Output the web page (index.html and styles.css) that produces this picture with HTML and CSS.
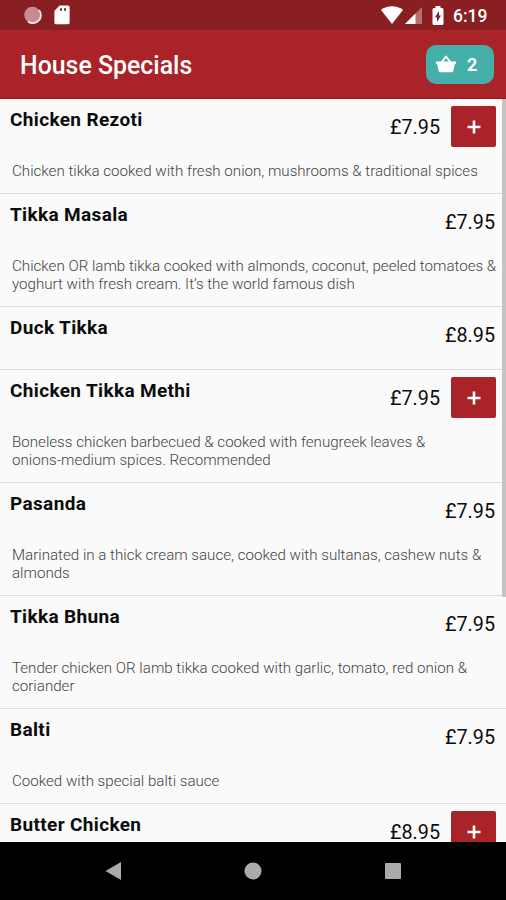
FILE: index.html
```html
<!DOCTYPE html>
<html lang="en">
<head>
  <meta charset="UTF-8">
  <meta name="viewport" content="width=device-width, initial-scale=1.0">
  <title>House Specials</title>
  <link rel="stylesheet" href="styles.css">
</head>
<body>

  <div class="status-bar">
    <div class="status-left">
      <svg width="18" height="18" viewBox="0 0 18 18">
        <circle cx="8.500" cy="9" r="8.300" fill="#c98b8e"/>
        <path d="M15 4A8 8 0 0 1 4 15.500" fill="none" stroke="#f6e4e4" stroke-width="1.800"/>
      </svg>
      <svg width="16" height="20" viewBox="0 0 16 20">
        <path d="M5.500 0.500H14a1.600 1.600 0 0 1 1.600 1.600v15.600a1.600 1.600 0 0 1-1.600 1.600H2a1.600 1.600 0 0 1-1.600-1.600V6z" fill="#fff"/>
        <path d="M6 3.200h2v2.600H6zM10 3.200h2v2.600h-2z" fill="#8a1f23"/>
      </svg>
    </div>
    <div class="status-right">
      <svg class="wifi" width="22" height="18" viewBox="0 0 22 18">
        <path d="M0 4C6-1 16-1 22 4L11 18z" fill="#fff"/>
      </svg>
      <svg class="signal" width="17" height="17" viewBox="0 0 17 17">
        <path d="M17 0v17H0z" fill="#b56f72"/>
        <path d="M10.500 6.500v10.500H0z" fill="#fff"/>
      </svg>
      <svg class="battery" width="12" height="20" viewBox="0 0 12 20">
        <path d="M3.500 0h5v2H10a1.500 1.500 0 0 1 1.500 1.500v14A1.500 1.500 0 0 1 10 19H2a1.500 1.500 0 0 1-1.500-1.500v-14A1.500 1.500 0 0 1 2 2h1.500z" fill="#fff"/>
        <path d="M7 5v4.500h2L5 16v-4.800H3z" fill="#8a1f23"/>
      </svg>
      <span class="clock">6:19</span>
    </div>
  </div>

  <header class="app-bar">
    <h1>House Specials</h1>
    <button class="basket">
      <svg width="20" height="18" viewBox="0 0 20 18">
        <path d="M5.500 7.500L10 1.500l4.500 6" fill="none" stroke="#fff" stroke-width="2" stroke-linejoin="round"/>
        <path d="M0 6.500h20v2.200h-1.100L17.300 16a1.500 1.500 0 0 1-1.500 1.200H4.200A1.500 1.500 0 0 1 2.700 16L1.100 8.700H0z" fill="#fff"/>
      </svg>
      <span>2</span>
    </button>
  </header>

  <main class="menu">
    <div class="item">
      <div class="row">
        <h2>Chicken Rezoti</h2>
        <span class="price">£7.95</span>
        <button class="add"><svg width="14" height="14" viewBox="0 0 14 14"><path d="M7 0.500v13M0.500 7h13" stroke="#fff" stroke-width="2.600"/></svg></button>
      </div>
      <p>Chicken tikka cooked with fresh onion, mushrooms &amp; traditional spices</p>
    </div>
    <div class="item">
      <div class="row">
        <h2>Tikka Masala</h2>
        <span class="price">£7.95</span>
      </div>
      <p>Chicken OR lamb tikka cooked with almonds, coconut, peeled tomatoes &amp;<br>yoghurt with fresh cream. It’s the world famous dish</p>
    </div>
    <div class="item">
      <div class="row">
        <h2>Duck Tikka</h2>
        <span class="price">£8.95</span>
      </div>
    </div>
    <div class="item">
      <div class="row">
        <h2>Chicken Tikka Methi</h2>
        <span class="price">£7.95</span>
        <button class="add"><svg width="14" height="14" viewBox="0 0 14 14"><path d="M7 0.500v13M0.500 7h13" stroke="#fff" stroke-width="2.600"/></svg></button>
      </div>
      <p>Boneless chicken barbecued &amp; cooked with fenugreek leaves &amp;<br>onions-medium spices. Recommended</p>
    </div>
    <div class="item">
      <div class="row">
        <h2>Pasanda</h2>
        <span class="price">£7.95</span>
      </div>
      <p>Marinated in a thick cream sauce, cooked with sultanas, cashew nuts &amp;<br>almonds</p>
    </div>
    <div class="item">
      <div class="row">
        <h2>Tikka Bhuna</h2>
        <span class="price">£7.95</span>
      </div>
      <p>Tender chicken OR lamb tikka cooked with garlic, tomato, red onion &amp;<br>coriander</p>
    </div>
    <div class="item">
      <div class="row">
        <h2>Balti</h2>
        <span class="price">£7.95</span>
      </div>
      <p>Cooked with special balti sauce</p>
    </div>
    <div class="item">
      <div class="row">
        <h2>Butter Chicken</h2>
        <span class="price">£8.95</span>
        <button class="add"><svg width="14" height="14" viewBox="0 0 14 14"><path d="M7 0.500v13M0.500 7h13" stroke="#fff" stroke-width="2.600"/></svg></button>
      </div>
    </div>
    <div class="scrollbar"></div>
  </main>

  <nav class="nav-bar">
    <svg width="16" height="18" viewBox="0 0 16 18"><path d="M0.500 9L16 0v18z" fill="#ababab"/></svg>
    <svg width="18" height="18" viewBox="0 0 18 18"><circle cx="9" cy="9" r="8.500" fill="#ababab"/></svg>
    <svg width="16" height="16" viewBox="0 0 16 16"><rect width="16" height="16" rx="1" fill="#ababab"/></svg>
  </nav>

</body>
</html>
```
FILE: styles.css
```css
* {
  box-sizing: border-box;
}

body {
  margin: 0;
  height: 900px;
  display: flex;
  flex-direction: column;
  overflow: hidden;
  font-family: Roboto, sans-serif;
  background: #fafafa;
  color: #0c0c0c;
}

h1, h2, p {
  margin: 0;
}

svg {
  display: block;
  flex: none;
}

button {
  border: none;
  padding: 0;
  font-family: inherit;
  color: #fff;
}

.status-bar {
  flex: none;
  height: 30px;
  padding: 0 19px 0 24px;
  display: flex;
  justify-content: space-between;
  align-items: center;
  background: #8a1f23;
}

.status-left,
.status-right {
  display: flex;
  align-items: center;
}

.status-left {
  gap: 12px;
}

.signal {
  margin: 1px 0 0 2px;
}

.battery {
  margin: 1px 9px 0 10px;
}

.clock {
  width: 34px;
  padding-top: 1px;
  color: #fff;
  font-size: 17.5px;
  font-weight: 500;
  white-space: nowrap;
}

.app-bar {
  flex: none;
  height: 69px;
  padding: 0 12px 0 20px;
  display: flex;
  justify-content: space-between;
  align-items: center;
  background: #a92329;
  border-bottom: 1px solid #a01217;
}

.app-bar h1 {
  padding-top: 2px;
  color: #fff;
  font-size: 24.9px;
  font-weight: 500;
}

.basket {
  width: 68px;
  height: 39px;
  padding-left: 10px;
  display: flex;
  align-items: center;
  gap: 11px;
  border-radius: 10px;
  background: #45b0aa;
  font-size: 18px;
  font-weight: 700;
}

.menu {
  position: relative;
  flex: 1;
  min-height: 0;
  overflow: hidden;
}

.item {
  border-bottom: 1px solid #dedede;
}

.row {
  height: 62px;
  padding: 7px 10px 0;
  display: flex;
  align-items: flex-start;
}

.row h2 {
  flex: 1;
  margin-top: 2px;
  font-size: 19px;
  line-height: 24px;
  font-weight: 700;
  letter-spacing: 0.35px;
}

.price {
  font-size: 19.8px;
  line-height: 24px;
  margin: 10px 1px 0 0;
}

.add {
  width: 45px;
  height: 41px;
  margin-left: 10px;
  display: flex;
  justify-content: center;
  align-items: center;
  border-radius: 2px;
  background: #a92329;
}

.item p {
  padding: 1px 0 13px 12px;
  font-size: 15.13px;
  line-height: 18px;
  font-weight: 300;
  color: #444;
  white-space: nowrap;
}

.scrollbar {
  position: absolute;
  top: 0;
  right: 0;
  width: 4px;
  height: 498px;
  background: #c4c4c4;
}

.nav-bar {
  flex: none;
  height: 58px;
  padding: 0 105px;
  display: flex;
  justify-content: space-between;
  align-items: center;
  background: #000;
}
```
